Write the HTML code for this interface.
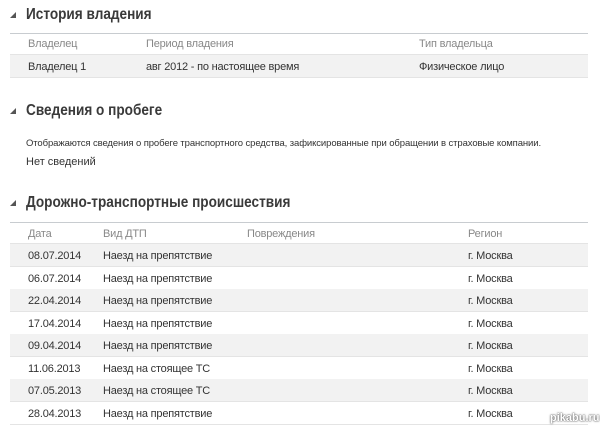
<!DOCTYPE html>
<html><head><meta charset="utf-8"><style>
body{margin:0;width:600px;height:430px;background:#fff;font-family:"Liberation Sans","DejaVu Sans",sans-serif;color:#333;position:relative;overflow:hidden}
.h{position:absolute;left:26px;font-size:16px;font-weight:bold;color:#3a3a3a;transform:scaleX(0.85);transform-origin:left top;white-space:nowrap}
.tri{position:absolute;left:10px;width:0;height:0;border-left:6px solid transparent;border-bottom:6px solid #555}
.line{position:absolute;left:10px;width:578px;height:1px;background:#c8ccd0}
.row{position:absolute;left:10px;width:578px;height:22px;border-bottom:1px solid #e4e4e4;font-size:11px;letter-spacing:-0.2px}
.row.s{background:#f2f2f2}
.row span{position:absolute;top:6px;white-space:nowrap}
.hd{color:#888}
.t{position:absolute;white-space:nowrap}
</style></head><body>
<div class="tri" style="top:12px"></div>
<div class="h" style="top:6px">История владения</div>
<div class="line" style="top:33px"></div>
<div class="row hd" style="top:34px;height:20px"><span style="left:18px;top:4px">Владелец</span><span style="left:136px;top:4px">Период владения</span><span style="left:409px;top:4px">Тип владельца</span></div>
<div class="row s" style="top:55px"><span style="left:18px">Владелец 1</span><span style="left:136px">авг 2012 - по настоящее время</span><span style="left:409px">Физическое лицо</span></div>

<div class="tri" style="top:108px"></div>
<div class="h" style="top:102px">Сведения о пробеге</div>
<div class="t" style="left:26px;top:138px;font-size:9.5px;letter-spacing:-0.1px">Отображаются сведения о пробеге транспортного средства, зафиксированные при обращении в страховые компании.</div>
<div class="t" style="left:26px;top:156px;font-size:11px">Нет сведений</div>

<div class="tri" style="top:200px"></div>
<div class="h" style="top:194px">Дорожно-транспортные происшествия</div>
<div class="line" style="top:222px"></div>
<div class="row hd" style="top:223px;height:20px"><span style="left:18px;top:5px">Дата</span><span style="left:93px;top:5px">Вид ДТП</span><span style="left:237px;top:5px">Повреждения</span><span style="left:458px;top:5px">Регион</span></div>
<div class="row s" style="top:244px"><span style="left:18px">08.07.2014</span><span style="left:93px">Наезд на препятствие</span><span style="left:458px">г. Москва</span></div>
<div class="row" style="top:267px"><span style="left:18px">06.07.2014</span><span style="left:93px">Наезд на препятствие</span><span style="left:458px">г. Москва</span></div>
<div class="row s" style="top:289px"><span style="left:18px">22.04.2014</span><span style="left:93px">Наезд на препятствие</span><span style="left:458px">г. Москва</span></div>
<div class="row" style="top:312px"><span style="left:18px">17.04.2014</span><span style="left:93px">Наезд на препятствие</span><span style="left:458px">г. Москва</span></div>
<div class="row s" style="top:334px"><span style="left:18px">09.04.2014</span><span style="left:93px">Наезд на препятствие</span><span style="left:458px">г. Москва</span></div>
<div class="row" style="top:357px"><span style="left:18px">11.06.2013</span><span style="left:93px">Наезд на стоящее ТС</span><span style="left:458px">г. Москва</span></div>
<div class="row s" style="top:379px"><span style="left:18px">07.05.2013</span><span style="left:93px">Наезд на стоящее ТС</span><span style="left:458px">г. Москва</span></div>
<div class="row" style="top:402px"><span style="left:18px">28.04.2013</span><span style="left:93px">Наезд на препятствие</span><span style="left:458px">г. Москва</span></div>
<div class="t" style="left:550px;top:412px;font-size:11px;font-weight:bold;color:#fff;text-shadow:0 0 2px #555,0 0 1px #555">pikabu.ru</div>
</body></html>
